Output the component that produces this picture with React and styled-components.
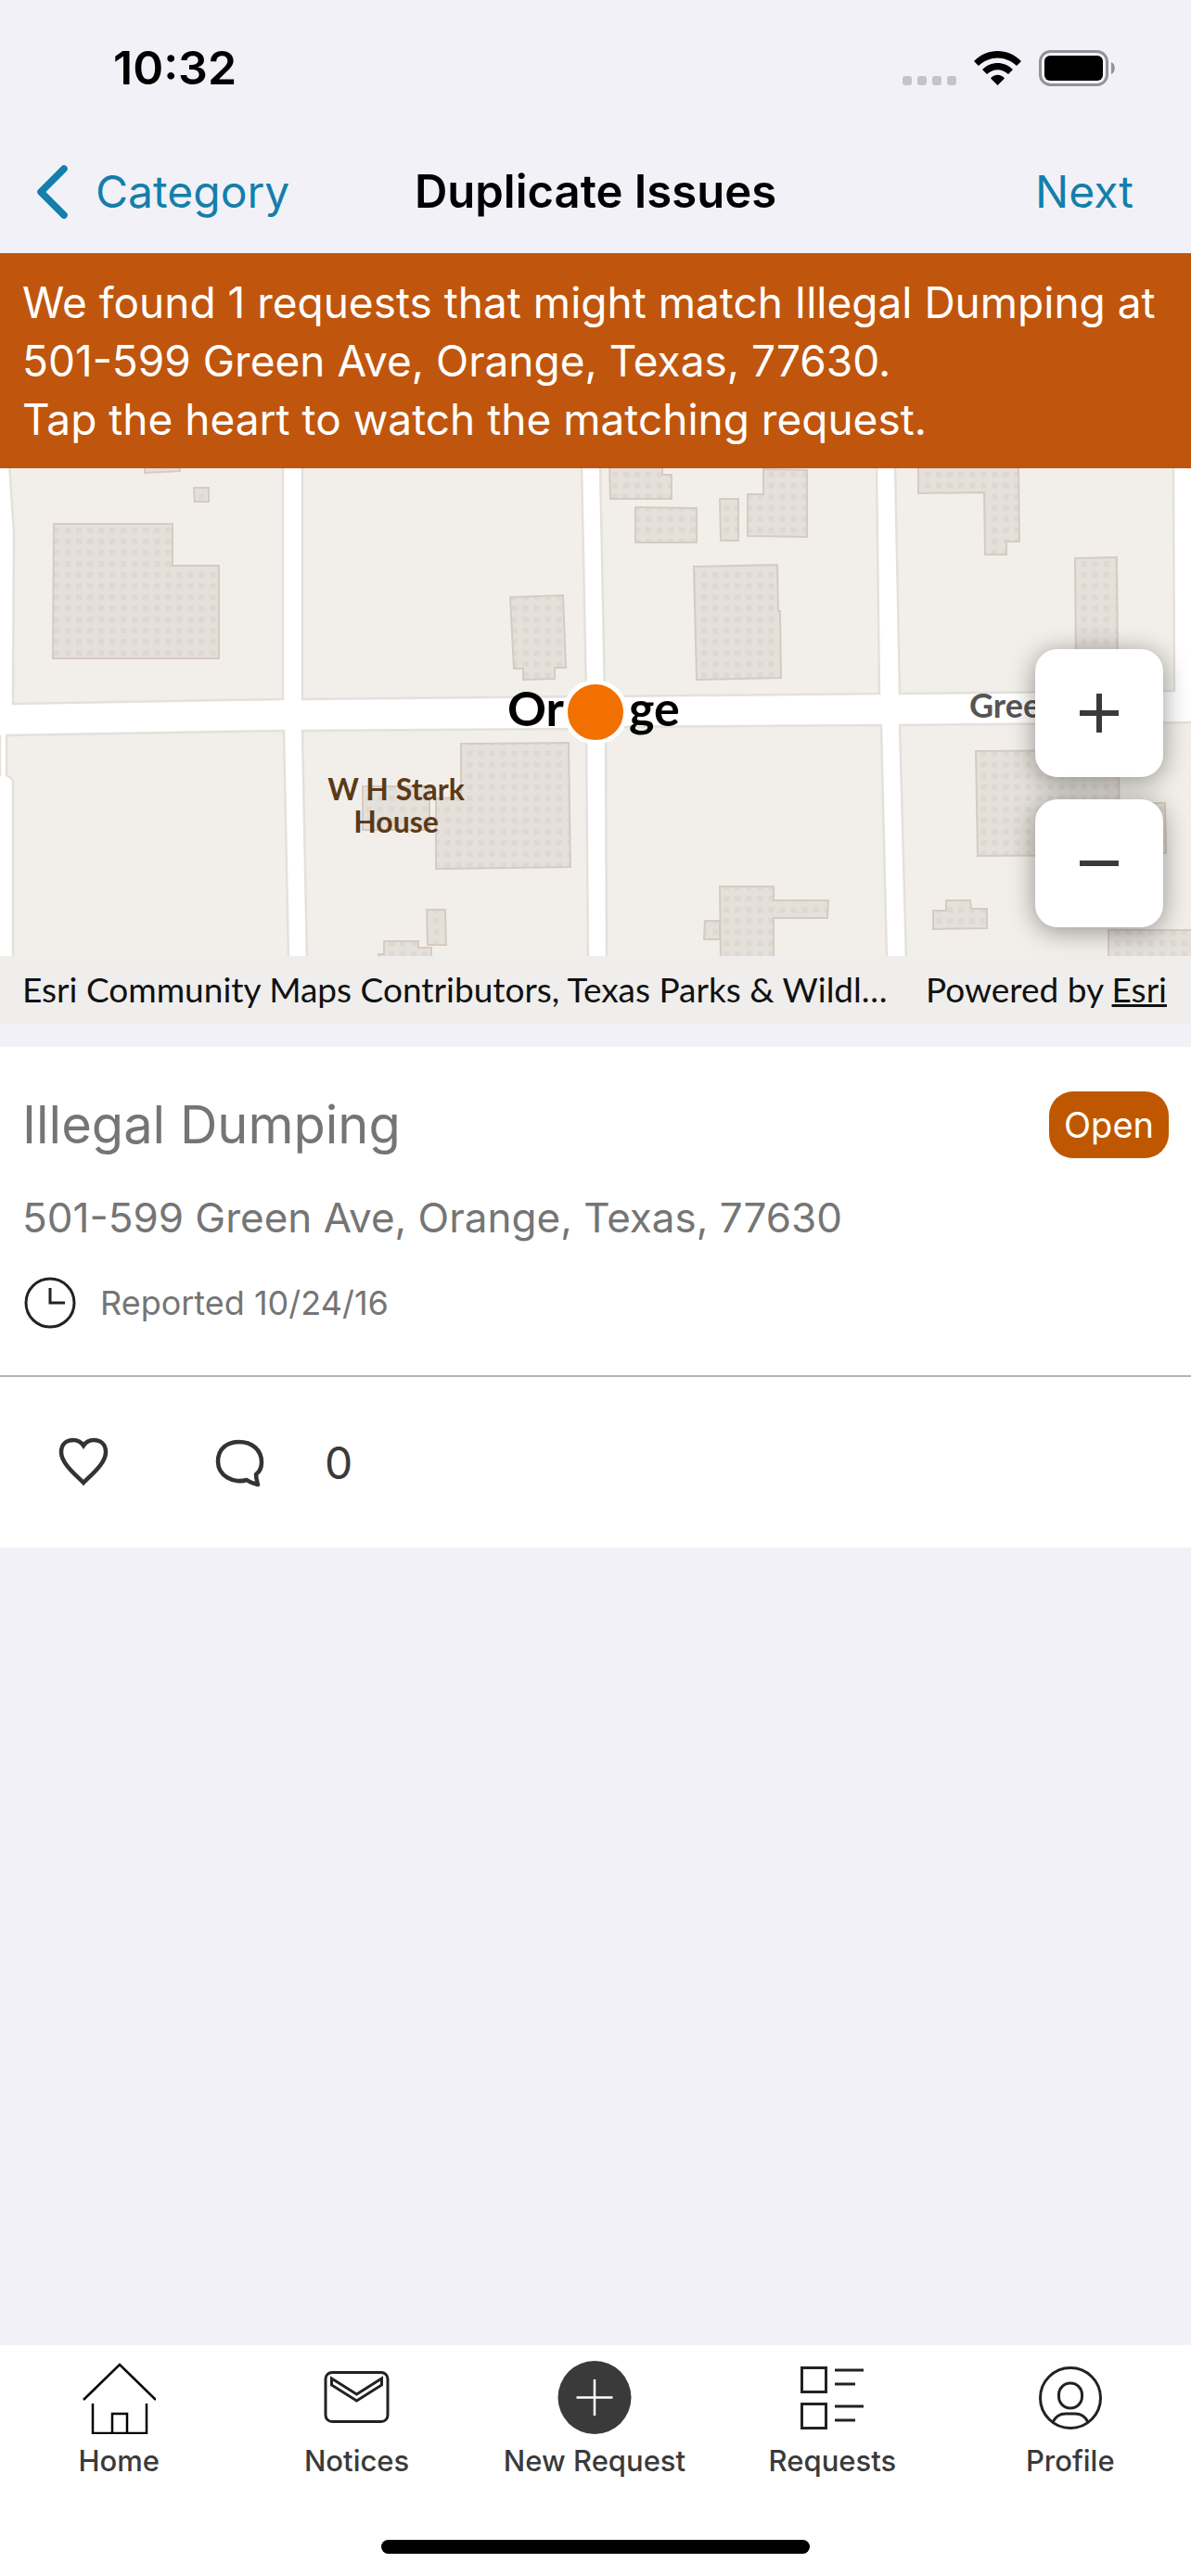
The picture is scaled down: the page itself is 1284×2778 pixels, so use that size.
import React from 'react';
import styled, { createGlobalStyle, ThemeProvider } from 'styled-components';

const theme = {
  fonts: {
    first: "Inter, 'Liberation Sans', sans-serif",
    map: "Lato, 'Open Sans', sans-serif",
  },
  colours: {
    page: '#f2f1f7',
    surface: '#ffffff',
    banner: '#c0560d',
    badge: '#bf5700',
    link: '#137fab',
    muted: '#757575',
    dark: '#3a3a3a',
    line: '#b5b5b5',
  },
};

const GlobalStyle = createGlobalStyle`
  * {
    box-sizing: border-box;
  }
  body {
    margin: 0;
    background: ${theme.colours.page};
    font-family: ${theme.fonts.first};
  }
  button {
    margin: 0;
    padding: 0;
    border: 0;
    background: none;
    color: inherit;
    font: inherit;
    cursor: pointer;
  }
  svg {
    display: block;
    flex: none;
  }
`;

const Screen = styled.div`
  display: flex;
  flex-direction: column;
  min-height: 100vh;
  background: ${({ theme }) => theme.colours.page};
`;

const StatusBar = styled.div`
  display: flex;
  align-items: center;
  justify-content: space-between;
  height: 146px;
  padding: 0 82px 0 122px;
`;

const Time = styled.span`
  font-size: 50px;
  font-weight: 600;
  color: #000;
`;

const StatusIcons = styled.div`
  display: flex;
  align-items: center;
  gap: 19px;
`;

const NavBar = styled.header`
  display: grid;
  grid-template-columns: 1fr auto 1fr;
  align-items: center;
  height: 127px;
  padding: 0 38px 6px;
`;

const NavTitle = styled.h1`
  margin: 0;
  font-size: 49px;
  font-weight: 600;
  color: #000;
`;

const NavButton = styled.button`
  display: flex;
  align-items: center;
  gap: 28px;
  justify-self: ${({ $end }) => ($end ? 'end' : 'start')};
  && {
    padding-right: ${({ $end }) => ($end ? '24px' : '0')};
    color: ${({ theme }) => theme.colours.link};
    font-size: 48px;
  }
`;

const Banner = styled.p`
  margin: 0;
  padding: 22px 24px 21px;
  background: ${({ theme }) => theme.colours.banner};
  color: #fff;
  font-size: 46px;
  line-height: 63px;
`;

const MapPanel = styled.section`
  position: relative;
  background: #fff;
`;

const MapCanvas = styled.svg`
  width: 100%;
  height: 526px;
`;

const MapLabel = styled.text`
  font-family: ${({ theme }) => theme.fonts.map};
  font-size: ${({ $size }) => $size}px;
  font-weight: 700;
  fill: ${({ $colour }) => $colour};
`;

const ZoomControls = styled.div`
  position: absolute;
  top: 195px;
  right: 30px;
  display: flex;
  flex-direction: column;
  gap: 24px;
`;

const ZoomButton = styled.button`
  display: flex;
  align-items: center;
  justify-content: center;
  width: 138px;
  height: 138px;
  && {
    border-radius: 24px;
    background: #fff;
  }
  box-shadow: 0 4px 28px rgba(0, 0, 0, 0.4);
`;

const Attribution = styled.div`
  display: flex;
  align-items: center;
  justify-content: space-between;
  height: 74px;
  padding: 0 26px 4px 24px;
  background: #efeeec;
  color: #111;
  font-family: ${({ theme }) => theme.fonts.map};
  font-size: 37px;
  white-space: nowrap;

  a {
    color: inherit;
  }
`;

const Card = styled.article`
  margin-top: 24px;
  background: ${({ theme }) => theme.colours.surface};
`;

const CardBody = styled.div`
  display: flex;
  flex-direction: column;
  gap: 32px;
  padding: 48px 24px 50px;
  border-bottom: 2px solid ${({ theme }) => theme.colours.line};
  color: ${({ theme }) => theme.colours.muted};
`;

const CardHead = styled.div`
  display: flex;
  align-items: center;
  justify-content: space-between;
`;

const CardTitle = styled.h2`
  margin: 0;
  font-size: 56px;
  font-weight: 400;
  line-height: 72px;
`;

const Badge = styled.span`
  padding: 0 16px;
  border-radius: 26px;
  background: ${({ theme }) => theme.colours.badge};
  color: #fff;
  font-size: 38px;
  line-height: 72px;
`;

const Address = styled.p`
  margin: 0;
  font-size: 44px;
  line-height: 64px;
`;

const Reported = styled.div`
  display: flex;
  align-items: center;
  gap: 24px;
  font-size: 36px;
  line-height: 54px;
`;

const Actions = styled.div`
  display: flex;
  align-items: center;
  height: 184px;
  padding: 0 60px;
  gap: 112px;
  color: ${({ theme }) => theme.colours.dark};
  font-size: 48px;
`;

const ActionButton = styled.button`
  display: flex;
  align-items: center;
  gap: 64px;
`;

const TabBar = styled.nav`
  margin-top: auto;
  padding: 16px 0 24px;
  background: ${({ theme }) => theme.colours.surface};
`;

const Tabs = styled.div`
  display: grid;
  grid-template-columns: repeat(5, 1fr);
  padding-right: 2px;
`;

const Tab = styled.button`
  display: flex;
  flex-direction: column;
  align-items: center;
  gap: 11px;
  && {
    color: ${({ theme }) => theme.colours.dark};
    font-size: 31px;
    font-weight: 500;
    line-height: 36px;
  }
`;

const HomeIndicator = styled.div`
  width: 36%;
  height: 15px;
  margin: 67px auto 0;
  border-radius: 8px;
  background: #000;
`;

const blocks = [
  '10,-5 15,69 14,254 305,249 305,-5',
  '326,-5 326,249 632,246 627,-5',
  '647,-5 652,246 948,243 945,-5',
  '965,-5 970,243 1266,240 1265,-5',
  '7,288 306,283 311,530 14,530 14,337 12,334 7,331',
  '326,283 632,281 634,530 331,530',
  '653,279 950,277 956,530 654,530',
  '970,277 1290,274 1290,530 977,530',
];

const buildings = [
  '58,60 186,60 186,105 236,105 236,205 57,205',
  '209,21 225,21 225,36 210,36',
  '156,-5 194,-5 194,3 156,5',
  '550,139 607,137 610,215 598,215 598,227 564,228 564,216 554,216',
  '497,297 613,296 615,430 470,432 470,356 497,355',
  '391,343 463,343 463,390 391,390',
  '460,476 480,476 481,514 461,514',
  '414,510 451,510 451,517 465,517 465,530 408,530 408,524 414,524',
  '657,-5 714,-5 714,7 724,7 724,33 658,33',
  '685,42 751,43 751,80 685,80',
  '776,33 796,33 796,78 777,78',
  '823,1 870,2 870,74 806,73 806,28 823,28',
  '748,106 838,104 839,154 841,154 842,226 751,228',
  '990,-5 1098,-5 1099,79 1085,79 1085,93 1062,93 1061,26 990,27',
  '1159,97 1204,96 1205,215 1160,215',
  '1052,305 1206,304 1207,417 1054,418',
  '1215,361 1256,361 1257,415 1215,415',
  '776,451 834,451 834,466 893,466 892,485 834,485 834,530 777,530',
  '760,488 776,488 776,508 759,508',
  '1020,466 1046,466 1047,475 1064,475 1064,496 1006,497 1006,477 1020,477',
  '1195,498 1290,498 1290,530 1195,530',
];

const StreetMap = () => (
  <MapCanvas viewBox="0 0 1284 526" preserveAspectRatio="xMidYMid slice" role="img" aria-label="Map of Orange, Texas">
    <defs>
      <pattern id="dots" x="9.8" y="3.6" width="12.04" height="12.04" patternUnits="userSpaceOnUse">
        <rect width="6" height="6" fill="#dcd8d2" />
      </pattern>
    </defs>
    <g fill="#f2efea" stroke="#e3e1db" strokeWidth="2.5">
      {blocks.map((points) => <polygon key={points} points={points} />)}
      <path d="M0 288V332" fill="none" />
    </g>
    {buildings.map((points) => (
      <g key={points} strokeWidth="2">
        <polygon points={points} fill="#e5e0da" />
        <polygon points={points} fill="url(#dots)" stroke="#d6cbc2" />
      </g>
    ))}
    <MapLabel x="427" y="358" textAnchor="middle" $size={32} $colour="#5c3a17">W H Stark</MapLabel>
    <MapLabel x="427" y="393" textAnchor="middle" $size={32} $colour="#5c3a17">House</MapLabel>
    <MapLabel x="1045" y="269" $size={36} $colour="#555">Green Ave</MapLabel>
    <MapLabel x="608" y="278" textAnchor="end" $size={52} $colour="#000">Or</MapLabel>
    <MapLabel x="678" y="278" $size={52} $colour="#000">ge</MapLabel>
    <circle cx="642" cy="263" r="32.5" fill="#f27000" stroke="#fff" strokeWidth="5" />
  </MapCanvas>
);

const BatteryIcon = () => (
  <svg width="82" height="39" viewBox="0 0 82 39">
    <rect x="1.5" y="1.5" width="72" height="36" rx="11" fill="none" stroke="#939297" strokeWidth="3" />
    <rect x="6" y="6" width="63" height="27" rx="6" fill="#000" />
    <path d="M78 13c5 2 5 11 0 13z" fill="#939297" />
  </svg>
);

const WifiIcon = () => (
  <svg width="51" height="37" viewBox="0 0 51 37">
    <path d="M0 11C14-3.600 37-3.600 51 11L46 16C34 4.500 17 4.500 5 16z" />
    <path d="M9 20C18 10.500 33 10.500 42 20L37 25C30 18.500 21 18.500 14 25z" />
    <path d="M18 29.500C22 24.500 29 24.500 33 29.500L25.500 37z" />
  </svg>
);

const SignalIcon = () => (
  <svg width="58" height="37" viewBox="0 0 58 37" fill="#c4c3c9">
    {[0, 16, 32, 48].map((x) => <rect key={x} x={x} y="27" width="10" height="10" rx="3" />)}
  </svg>
);

const BackIcon = () => (
  <svg width="37" height="60" viewBox="0 0 37 60" fill="none" stroke="currentColor" strokeWidth="7.5" strokeLinecap="round" strokeLinejoin="round">
    <path d="M31 5L6 30L31 55" />
  </svg>
);

const ClockIcon = () => (
  <svg width="60" height="56" viewBox="0 0 60 56" fill="none" stroke="#222" strokeWidth="3">
    <circle cx="30" cy="28" r="26" />
    <path d="M30 12V28H46" />
  </svg>
);

const HeartIcon = () => (
  <svg width="60" height="60" viewBox="0 0 60 60" fill="none" stroke="#333" strokeWidth="4.5">
    <path d="M30 52C21 43 6 31 6 19C6 10 12 6 19 6C24 6 28 9 30 12C32 9 36 6 41 6C48 6 54 10 54 19C54 31 39 43 30 52z" />
  </svg>
);

const CommentIcon = () => (
  <svg width="54" height="54" viewBox="0 0 54 54" fill="none" stroke="#333" strokeWidth="4.5" strokeLinejoin="round">
    <path d="M34 46C20 50 3 42 3 26C3 12 13 5 26 5C39 5 50 13 50 27C50 33 48 37 44 40C44 44 45 47 46 51C42 50 38 49 34 46z" />
  </svg>
);

const HomeIcon = () => (
  <svg width="80" height="80" viewBox="0 0 80 80" fill="none" stroke="#000" strokeWidth="2.5">
    <path d="M2 43L41 5L80 43" />
    <path d="M12 47V79H70V47" />
    <path d="M33 79V58H49V79" />
  </svg>
);

const NoticesIcon = () => (
  <svg width="80" height="80" viewBox="0 0 80 80" fill="none" stroke="#222" strokeWidth="3">
    <rect x="6" y="13.500" width="67" height="53" rx="7" />
    <path d="M12.500 20V27L39.500 44L66.500 27V20L39.500 37z" />
  </svg>
);

const NewIcon = () => (
  <svg width="80" height="80" viewBox="0 0 80 80">
    <circle cx="40" cy="40.5" r="39.5" fill="#3a3a3a" />
    <path d="M40 21V60M20.500 40.500H59.500" stroke="#fff" strokeWidth="2.5" />
  </svg>
);

const RequestsIcon = () => (
  <svg width="80" height="80" viewBox="0 0 80 80" fill="none" stroke="#222" strokeWidth="3">
    <rect x="7.500" y="8.500" width="26" height="26" />
    <rect x="7.500" y="47.500" width="26" height="26" />
    <path d="M43 11H74M43 26H65M43 50H74M43 65H65" />
  </svg>
);

const ProfileIcon = () => (
  <svg width="80" height="80" viewBox="0 0 80 80" fill="none" stroke="#222" strokeWidth="3">
    <circle cx="40" cy="41" r="32.5" />
    <rect x="27.500" y="25" width="25" height="27" rx="12.500" />
    <path d="M21 67C24 61 28 58 35 58H45C52 58 56 61 59 67" />
  </svg>
);

const tabs = [
  { label: 'Home', Icon: HomeIcon },
  { label: 'Notices', Icon: NoticesIcon },
  { label: 'New Request', Icon: NewIcon },
  { label: 'Requests', Icon: RequestsIcon },
  { label: 'Profile', Icon: ProfileIcon },
];

const App = () => (
  <ThemeProvider theme={theme}>
    <GlobalStyle />
    <Screen>
      <StatusBar>
        <Time>10:32</Time>
        <StatusIcons>
          <SignalIcon />
          <WifiIcon />
          <BatteryIcon />
        </StatusIcons>
      </StatusBar>
      <NavBar>
        <NavButton><BackIcon />Category</NavButton>
        <NavTitle>Duplicate Issues</NavTitle>
        <NavButton $end>Next</NavButton>
      </NavBar>
      <Banner>
        We found 1 requests that might match Illegal Dumping at 501-599 Green Ave, Orange, Texas, 77630.
        <br />
        Tap the heart to watch the matching request.
      </Banner>
      <MapPanel>
        <StreetMap />
        <ZoomControls>
          <ZoomButton aria-label="Zoom in">
            <svg width="42" height="42" stroke="#3a3a3a" strokeWidth="6"><path d="M21 0V42M0 21H42" /></svg>
          </ZoomButton>
          <ZoomButton aria-label="Zoom out">
            <svg width="42" height="42" stroke="#3a3a3a" strokeWidth="6"><path d="M0 21H42" /></svg>
          </ZoomButton>
        </ZoomControls>
        <Attribution>
          <span>Esri Community Maps Contributors, Texas Parks &amp; Wildl…</span>
          <span>Powered by <a href="#esri">Esri</a></span>
        </Attribution>
      </MapPanel>
      <Card>
        <CardBody>
          <CardHead>
            <CardTitle>Illegal Dumping</CardTitle>
            <Badge>Open</Badge>
          </CardHead>
          <Address>501-599 Green Ave, Orange, Texas, 77630</Address>
          <Reported><ClockIcon />Reported 10/24/16</Reported>
        </CardBody>
        <Actions>
          <ActionButton aria-label="Watch"><HeartIcon /></ActionButton>
          <ActionButton><CommentIcon />0</ActionButton>
        </Actions>
      </Card>
      <TabBar>
        <Tabs>
          {tabs.map(({ label, Icon }) => (
            <Tab key={label}><Icon />{label}</Tab>
          ))}
        </Tabs>
        <HomeIndicator />
      </TabBar>
    </Screen>
  </ThemeProvider>
);

export default App;
